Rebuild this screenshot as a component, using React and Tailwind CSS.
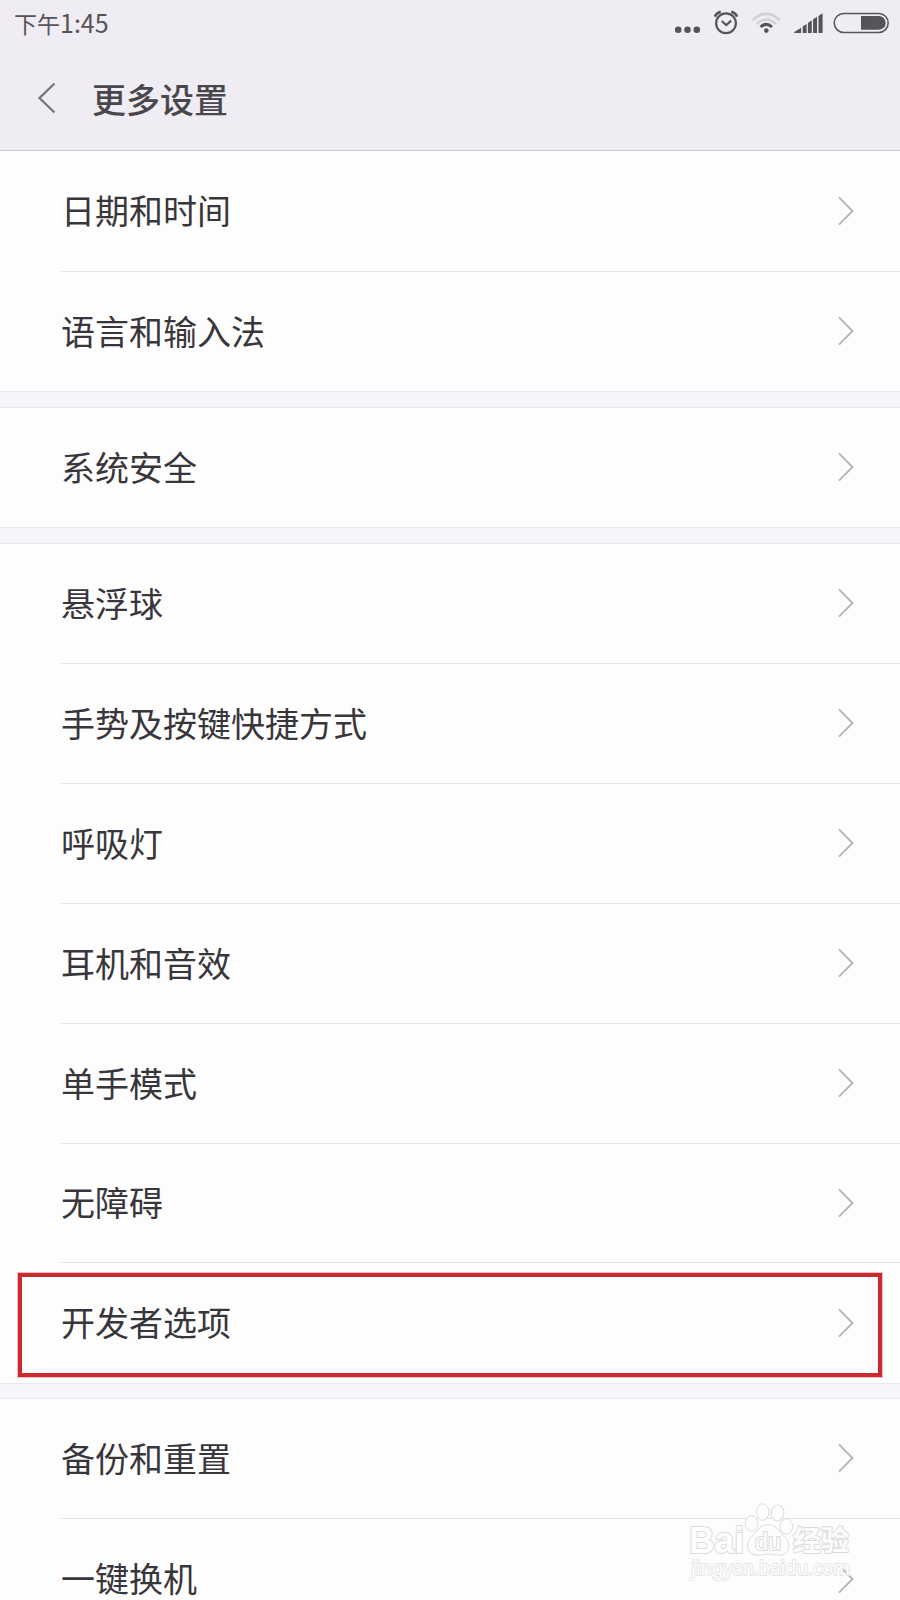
const groups = [
  {
    rows: [
      { label: "日期和时间", size: "h-[121px]", line: true },
      { label: "语言和输入法", size: "h-[119px]" },
    ],
    gap: "h-[17px]",
  },
  { rows: [{ label: "系统安全", size: "h-[119px]" }], gap: "h-[17px]" },
  {
    rows: [
      { label: "悬浮球", size: "h-[120px]", line: true },
      { label: "手势及按键快捷方式", size: "h-[120px]", line: true },
      { label: "呼吸灯", size: "h-[120px]", line: true },
      { label: "耳机和音效", size: "h-[120px]", line: true },
      { label: "单手模式", size: "h-[120px]", line: true },
      { label: "无障碍", size: "h-[119px]", line: true },
      { label: "开发者选项", size: "h-[120px]", highlight: true },
    ],
    gap: "h-4",
  },
  {
    rows: [
      { label: "备份和重置", size: "h-[120px]", line: true },
      { label: "一键换机", size: "h-[120px]" },
    ],
  },
];

function StatusIcons() {
  return (
    <svg width="240" height="46" viewBox="0 0 240 46" fill="none" stroke="#57535a" className="shrink-0">
      <g fill="#57535a" stroke="none">
        <circle cx="18.2" cy="29.8" r="3.3" />
        <circle cx="27.5" cy="29.8" r="3.3" />
        <circle cx="36.8" cy="29.8" r="3.3" />
      </g>
      <circle cx="66" cy="23.2" r="9.9" strokeWidth="2.2" />
      <path d="M61.6 21l4.7 4 4.9-4.4" strokeWidth="2.1" />
      <path d="M54.8 16.6Q56.5 13 60.8 11.8M77.2 16.6Q75.5 13 71.2 11.8" strokeWidth="2.5" />
      <path d="M92.8 20.2Q106.3 7.5 119.8 20.2" stroke="#d2cfd5" strokeWidth="2.7" />
      <path d="M96.8 23.8Q106.3 15.2 115.8 23.8" stroke="#d2cfd5" strokeWidth="2.4" />
      <path d="M100.6 27Q106.3 21.6 112 27" strokeWidth="3" />
      <circle cx="106.3" cy="30.6" r="2.3" fill="#57535a" stroke="none" />
      <path
        d="M134.3 33v-1l6.8-4.2V33zM142.7 33v-6.5l3.9-2.6V33zM147.9 33V22.9l3.9-2.6V33zM153.1 33V19.3l3.9-2.5V33zM158.5 33V15.9l4.1-2.7V33z"
        fill="#57535a"
        stroke="none"
      />
      <rect x="174.2" y="13.4" width="54" height="19" rx="9.5" strokeWidth="1.5" />
      <path d="M201 16h17.8a6.9 6.9 0 0 1 0 13.8H201z" fill="#57535a" stroke="none" />
    </svg>
  );
}

function Chevron() {
  return (
    <svg width="16" height="30" viewBox="0 0 16 30" fill="none" className="mr-[46px] shrink-0">
      <path d="M1 1.4L14.4 15L1 28.6" stroke="#b7b5b9" strokeWidth="2" />
    </svg>
  );
}

function Row({ row }) {
  return (
    <li className={`relative shrink-0 pl-[61px] ${row.size}`}>
      <div
        className={`flex h-full items-center justify-between pb-px ${row.line ? "border-b border-[#e3e2e4]" : ""}`}
      >
        <span className="pb-px text-[34px] leading-none text-[#39363b]">{row.label}</span>
        <Chevron />
      </div>
      {row.highlight && (
        <div className="absolute left-[18px] top-[10px] h-[104px] w-[864px] border-4 border-[#cb2a31] outline-1 outline-[#cb2a31]/30" />
      )}
    </li>
  );
}

function Watermark() {
  return (
    <svg
      className="absolute left-[680px] top-[1495px]"
      width="180"
      height="105"
      viewBox="0 0 180 105"
      fill="#fdfdfd"
      stroke="#dcdcdc"
      strokeWidth="1"
    >
      <g fontFamily="'Liberation Sans', sans-serif" fontWeight="700" paintOrder="stroke">
        <text x="9" y="58" fontSize="36" textLength="55" lengthAdjust="spacingAndGlyphs" strokeWidth="2">
          Bai
        </text>
        <text
          x="113"y="56"
          fontSize="28"
          fontFamily="'Noto Sans CJK SC', sans-serif"
          textLength="56"
          strokeWidth="2"
        >
          经验
        </text>
        <text
          x="11"
          y="80"
          fontSize="19"
          fontFamily="'Noto Sans', sans-serif"
          fontWeight="400"
          textLength="159"
          lengthAdjust="spacingAndGlyphs"
          stroke="#e4e4e4"
          strokeWidth="1.8"
        >
          jingyan.baidu.com
        </text>
      </g>
      <ellipse cx="71.5" cy="28.5" rx="6.4" ry="7.8" />
      <ellipse cx="82.7" cy="17" rx="6.2" ry="8.3" />
      <ellipse cx="97.5" cy="18" rx="6.3" ry="8" transform="rotate(10 97.5 18)" />
      <ellipse cx="106.3" cy="31.5" rx="6.3" ry="7.8" />
      <path d="M88 29.5c8 0 11 7 17 13 6.500 6 5 16.500-5 17.500-5 .5-8-1-12-1s-7 1.500-12 1c-9-1-11-11.500-5-17.500 6-6 9-13 17-13z" />
      <text
        x="75"
        y="54.500"
        fontSize="23"
        fontFamily="'Liberation Sans', sans-serif"
        textLength="26"
        lengthAdjust="spacingAndGlyphs"
        stroke="#dadada"
        strokeWidth="2"
        paintOrder="stroke"
      >
        du
      </text>
    </svg>
  );
}

export default function App() {
  return (
    <main
      lang="zh-CN"
      className="relative flex h-[1600px] w-[900px] flex-col overflow-hidden bg-[#fdfdfd] font-['Noto_Sans_CJK_SC',sans-serif]"
    >
      <header className="flex h-[151px] shrink-0 flex-col border-b border-[#c9c7cc] bg-[#efedf3]">
        <div className="flex h-[46px] items-center justify-between pl-[14px]">
          <time className="flex items-baseline pb-[2px] text-[23px] leading-none text-[#57535a]">
            下午<span className="text-[25px] leading-none">1:45</span>
          </time>
          <StatusIcons />
        </div>
        <div className="flex h-[104px] items-center pl-[37px]">
          <svg width="20" height="32" viewBox="0 0 20 32" fill="none" className="shrink-0">
            <path d="M17.5 1.5L2.500 16L17.5 30.5" stroke="#77747a" strokeWidth="2.3" />
          </svg>
          <h1 className="ml-[35px] pt-px text-[34px] font-medium leading-none text-[#4a474c]">更多设置</h1>
        </div>
      </header>
      {groups.map((group, i) => (
        <section key={i} className="shrink-0">
          <ul>
            {group.rows.map((row) => (
              <Row key={row.label} row={row} />
            ))}
          </ul>
          {group.gap && <div className={`border-y border-[#e8e7ea] bg-[#f7f5f9] ${group.gap}`} />}
        </section>
      ))}
      <Watermark />
    </main>
  );
}
